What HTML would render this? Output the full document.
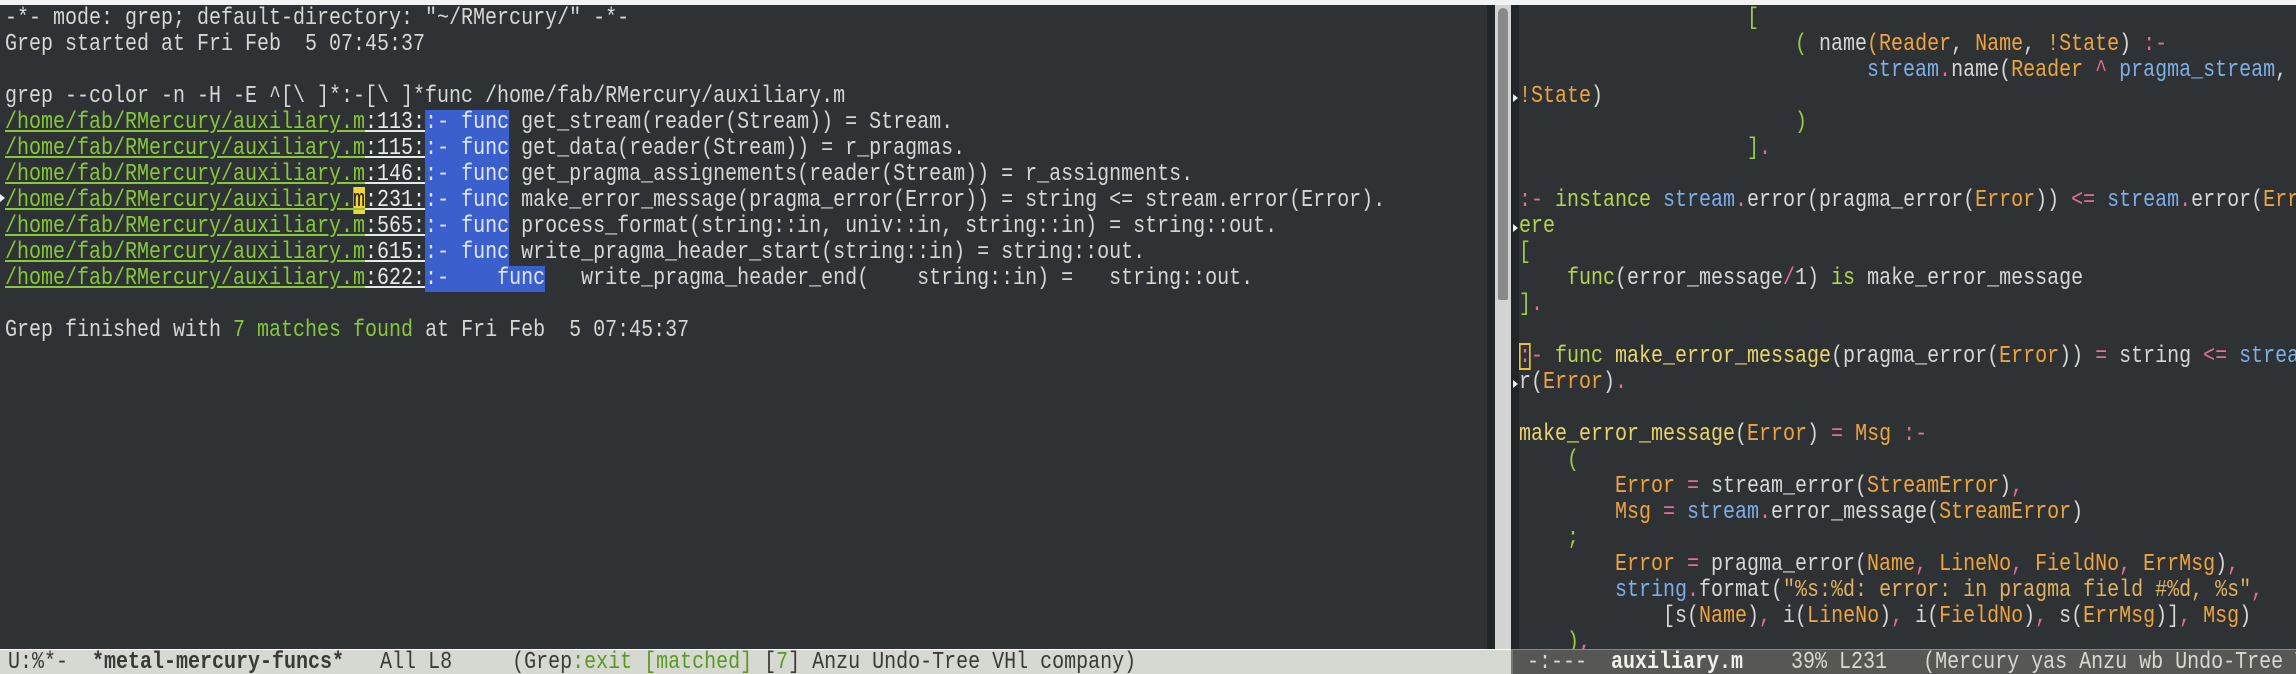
<!DOCTYPE html>
<html><head><meta charset="utf-8"><style>
*{margin:0;padding:0;box-sizing:border-box}
body{width:2296px;height:674px;overflow:hidden;background:#2e3235;position:relative;font-family:"Liberation Mono",monospace;font-size:24px;color:#d6d6d2}
#top{position:absolute;left:0;top:0;width:2296px;height:5px;background:#f2f2f2}
.pane{position:absolute;top:5px;height:644px;overflow:hidden;background:#2e3235}
.t{transform:scaleX(0.8333);transform-origin:0 0;width:3000px}
.l{white-space:pre;height:26px;line-height:26px;position:relative}
.hl{display:inline-block;height:26px;background:#3b5fcc;color:#e0e6ff;vertical-align:top}
.p{color:#86c83a;text-decoration:underline;text-decoration-color:#86c83a}
.n{color:#e8e8e8;text-decoration:underline}
.g{color:#86c83a}
.cur{background:#f3d43a;color:#222}
.k{color:#e86a9c}.f{color:#b2d44e}.y{color:#e8d46a}.o{color:#eda43f}.b{color:#7eaee6}.br{color:#9acb46}.s{color:#e0b060}
.ml{position:absolute;top:649px;height:25px;line-height:25px;white-space:pre;overflow:hidden}
.ml .t{display:block}
.fr{position:absolute;width:0;height:0;border-top:4px solid transparent;border-bottom:4px solid transparent;border-left:5px solid #eee}
</style></head><body>
<div id="top"></div>
<div class="pane" style="left:0;width:1487px;padding-left:5px;padding-top:1px"><div class="t">
<div class="l">-*- mode: grep; default-directory: "~/RMercury/" -*-</div>
<div class="l">Grep started at Fri Feb  5 07:45:37</div>
<div class="l"> </div>
<div class="l">grep --color -n -H -E ^[\ ]*:-[\ ]*func /home/fab/RMercury/auxiliary.m</div>
<div class="l"><span class="p">/home/fab/RMercury/auxiliary.m</span><span class="n">:113:</span><span class="hl">:- func</span> get_stream(reader(Stream)) = Stream.</div>
<div class="l"><span class="p">/home/fab/RMercury/auxiliary.m</span><span class="n">:115:</span><span class="hl">:- func</span> get_data(reader(Stream)) = r_pragmas.</div>
<div class="l"><span class="p">/home/fab/RMercury/auxiliary.m</span><span class="n">:146:</span><span class="hl">:- func</span> get_pragma_assignements(reader(Stream)) = r_assignments.</div>
<div class="l"><span class="p">/home/fab/RMercury/auxiliary.</span><span class="p cur">m</span><span class="n">:231:</span><span class="hl">:- func</span> make_error_message(pragma_error(Error)) = string &lt;= stream.error(Error).</div>
<div class="l"><span class="p">/home/fab/RMercury/auxiliary.m</span><span class="n">:565:</span><span class="hl">:- func</span> process_format(string::in, univ::in, string::in) = string::out.</div>
<div class="l"><span class="p">/home/fab/RMercury/auxiliary.m</span><span class="n">:615:</span><span class="hl">:- func</span> write_pragma_header_start(string::in) = string::out.</div>
<div class="l"><span class="p">/home/fab/RMercury/auxiliary.m</span><span class="n">:622:</span><span class="hl">:-    func</span>   write_pragma_header_end(    string::in) =   string::out.</div>
<div class="l"> </div>
<div class="l">Grep finished with <span class="g">7 matches found</span> at Fri Feb  5 07:45:37</div>
</div></div>
<div class="fr" style="left:0;top:194px"></div>
<div style="position:absolute;left:1487px;top:5px;width:8px;height:644px;background:#222527"></div>
<div style="position:absolute;left:1495px;top:5px;width:16px;height:644px;background:#d3d3d3"></div>
<div style="position:absolute;left:1498px;top:8px;width:10px;height:292px;background:#8a8a8a;border-radius:5px 5px 2px 2px"></div>
<div style="position:absolute;left:1511px;top:5px;width:8px;height:644px;background:#222527"></div>
<div class="pane" style="left:1519px;width:777px;padding-top:1px"><div class="t">
<div class="l">                   <span class="br">[</span></div>
<div class="l">                       <span class="br">(</span> name<span class="o">(Reader</span>, <span class="o">Name</span>, <span class="o">!State</span>) <span class="k">:-</span></div>
<div class="l">                             <span class="b">stream</span><span class="k">.</span>name(<span class="o">Reader</span> <span class="k">^</span> <span class="b">pragma_stream</span>,</div>
<div class="l"><span class="o">!State</span>)</div>
<div class="l">                       <span class="br">)</span></div>
<div class="l">                   <span class="br">]</span><span class="k">.</span></div>
<div class="l"> </div>
<div class="l"><span class="k">:-</span> <span class="f">instance</span> <span class="b">stream</span><span class="k">.</span>error(pragma_error(<span class="o">Error</span>)) <span class="k">&lt;=</span> <span class="b">stream</span><span class="k">.</span>error(<span class="o">Err</span></div>
<div class="l"><span class="f">ere</span></div>
<div class="l"><span class="br">[</span></div>
<div class="l">    <span class="f">func</span>(error_message<span class="k">/</span>1) <span class="f">is</span> make_error_message</div>
<div class="l"><span class="br">]</span><span class="k">.</span></div>
<div class="l"> </div>
<div class="l"><span class="k" style="outline:2px solid #e8c030;outline-offset:-2px">:</span><span class="k">-</span> <span class="f">func</span> <span class="y">make_error_message</span>(pragma_error(<span class="o">Error</span>)) <span class="k">=</span> string <span class="k">&lt;=</span> <span class="b">strea</span></div>
<div class="l">r(<span class="o">Error</span>)<span class="k">.</span></div>
<div class="l"> </div>
<div class="l"><span class="y">make_error_message</span>(<span class="o">Error</span>) <span class="k">=</span> <span class="o">Msg</span> <span class="k">:-</span></div>
<div class="l">    <span class="br">(</span></div>
<div class="l">        <span class="o">Error</span> <span class="k">=</span> stream_error(<span class="o">StreamError</span>)<span class="k">,</span></div>
<div class="l">        <span class="o">Msg</span> <span class="k">=</span> <span class="b">stream</span><span class="k">.</span>error_message(<span class="o">StreamError</span>)</div>
<div class="l">    <span class="br">;</span></div>
<div class="l">        <span class="o">Error</span> <span class="k">=</span> pragma_error(<span class="o">Name</span><span class="k">,</span> <span class="o">LineNo</span><span class="k">,</span> <span class="o">FieldNo</span><span class="k">,</span> <span class="o">ErrMsg</span>)<span class="k">,</span></div>
<div class="l">        <span class="b">string</span><span class="k">.</span>format(<span class="s">"%s:%d: error: in pragma field #%d, %s"</span><span class="k">,</span></div>
<div class="l">            [s(<span class="o">Name</span>)<span class="k">,</span> i(<span class="o">LineNo</span>)<span class="k">,</span> i(<span class="o">FieldNo</span>)<span class="k">,</span> s(<span class="o">ErrMsg</span>)]<span class="k">,</span> <span class="o">Msg</span>)</div>
<div class="l">    <span class="br">)</span><span class="k">,</span></div>
</div></div>
<div class="fr" style="left:1513px;top:94px"></div>
<div class="fr" style="left:1513px;top:224px"></div>
<div class="fr" style="left:1513px;top:380px"></div>
<div class="ml" style="left:0;width:1511px;background:#d6d8d2;color:#3a3a38;padding-left:8px;border-top:1px solid #fff"><div class="t">U:%*-  <b>*metal-mercury-funcs*</b>   All L8     (Grep<span style="color:#5a9a20">:exit [matched]</span> [<span style="color:#5a9a20">7</span>] Anzu Undo-Tree VHl company)</div></div>
<div class="ml" style="left:1511px;width:785px;background:#575853;color:#d8d8d2;padding-left:14px;border-top:1px solid #888;border-left:2px solid #777"><div class="t">-:---  <b style="color:#f0f0ea">auxiliary.m</b>    39% L231   (Mercury yas Anzu wb Undo-Tree VHl company)</div></div>
</body></html>
